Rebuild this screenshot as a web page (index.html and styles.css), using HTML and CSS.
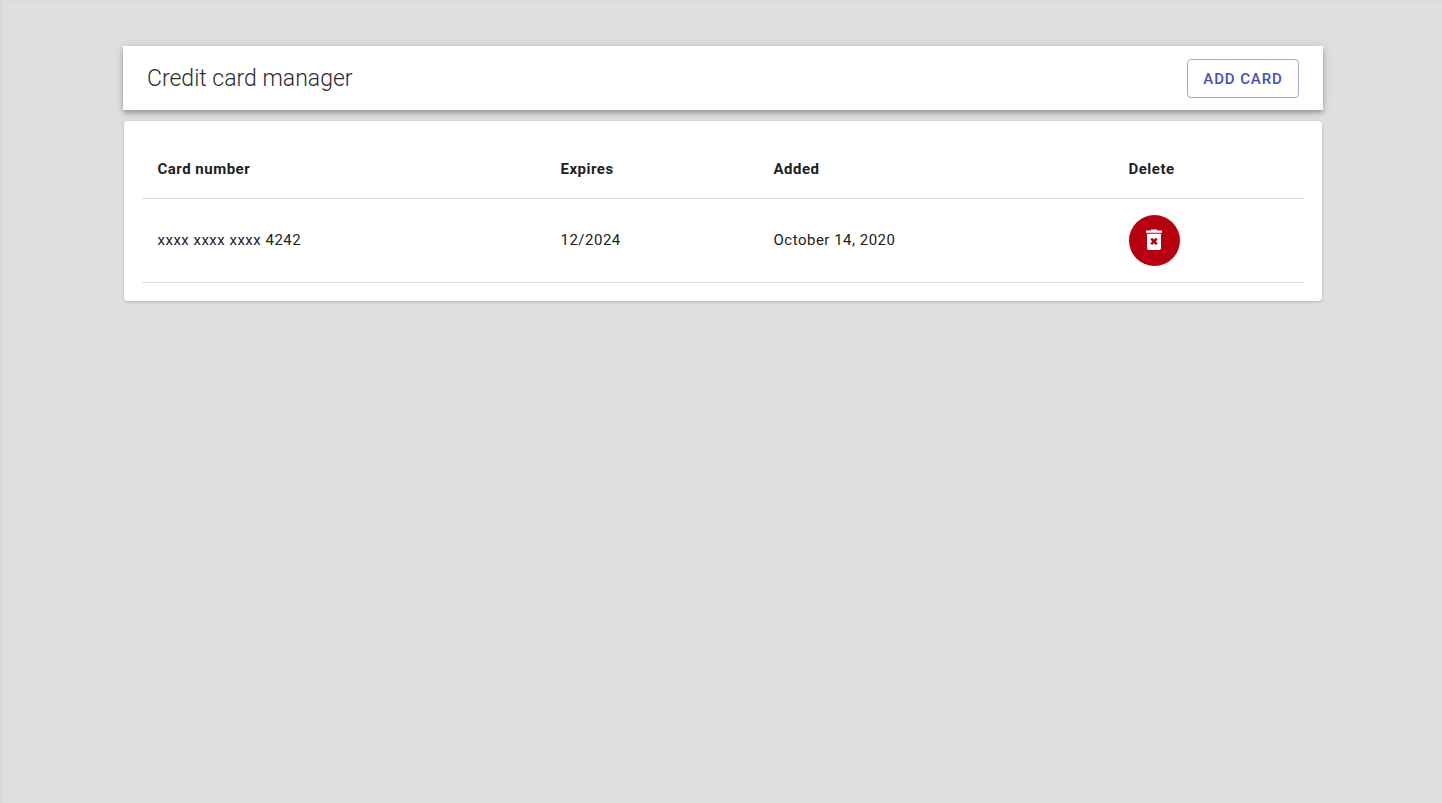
FILE: index.html
```html
<!DOCTYPE html>
<html lang="en">
<head>
<meta charset="utf-8">
<title>Credit card manager</title>
<link rel="stylesheet" href="styles.css">
</head>
<body>
<main class="page">
  <header class="topbar">
    <h1 class="title">Credit card manager</h1>
    <button class="add-btn" type="button">Add card</button>
  </header>
  <section class="card">
    <table class="cards-table">
      <colgroup>
        <col class="col-number"><col class="col-expires"><col class="col-added"><col class="col-delete">
      </colgroup>
      <thead>
        <tr><th>Card number</th><th>Expires</th><th>Added</th><th>Delete</th></tr>
      </thead>
      <tbody>
        <tr>
          <td>xxxx xxxx xxxx 4242</td>
          <td>12/2024</td>
          <td>October 14, 2020</td>
          <td>
            <button class="delete-btn" type="button" aria-label="Delete">
              <svg class="delete-icon" viewBox="0 0 24 24" width="24" height="24" aria-hidden="true">
                <path fill="#fff" d="M15 2.6V1.4H9v1.2H4v2.2h16V2.6z"/>
                <path fill="#fff" d="M5 5.8h14v14c0 1.4-.9 2.3-2.3 2.3H7.3C5.9 22.100 5 21.200 5 19.800z"/>
                <path fill="#b70010" d="M8.300 11.500l1.800-1.800L12 11.600l1.900-1.900 1.800 1.800-1.900 1.900 1.900 1.900-1.800 1.800-1.900-1.900-1.900 1.900-1.800-1.800 1.900-1.900z"/>
              </svg>
            </button>
          </td>
        </tr>
      </tbody>
    </table>
  </section>
</main>
</body>
</html>
```
FILE: styles.css
```css
* { box-sizing: border-box; }
html, body { height: 100%; }
body {
  margin: 0;
  background: #dfdfdf;
  border-left: 2px solid #d3dae6;
  border-top: 1px solid #d6d9de;
  font-family: Roboto, "Liberation Sans", sans-serif;
  color: #212121;
  overflow: hidden;
}
.page {
  width: 1200px;
  margin-left: 121px;
  padding-top: 45px;
}
.topbar {
  height: 64px;
  background: #fff;
  display: flex;
  align-items: center;
  justify-content: space-between;
  padding: 0 24px;
  box-shadow: 0 2px 4px -1px rgba(0,0,0,.2), 0 4px 5px 0 rgba(0,0,0,.14), 0 1px 10px 0 rgba(0,0,0,.12);
}
.title {
  margin: 0;
  font-size: 23px;
  font-weight: 300;
  line-height: 1;
  padding-top: 1px;
  color: #2b2b2b;
}
.add-btn {
  width: 112px;
  height: 39px;
  padding: 1px 0 0;
  background: #fff;
  border: 1px solid #9fa8da;
  border-radius: 4px;
  color: #3f51b5;
  font: 500 15px Roboto, "Liberation Sans", sans-serif;
  letter-spacing: .9px;
  text-transform: uppercase;
}
.card {
  margin: 11px 1px 0;
  background: #fff;
  border-radius: 4px;
  padding: 18px;
  box-shadow: 0 1px 3px rgba(0,0,0,.2);
}
.cards-table {
  width: 1162px;
  border-collapse: collapse;
  table-layout: fixed;
  font-size: 15px;
  letter-spacing: .5px;
}
.col-number { width: 403px; }
.col-expires { width: 213px; }
.col-added { width: 355px; }
.col-delete { width: 191px; }
th {
  height: 59px;
  padding: 2px 15px 0 15.5px;
  text-align: left;
  font-weight: 700;
  border-bottom: 1px solid #dedede;
}
td {
  height: 84px;
  padding: 0 15px 0 15.5px;
  border-bottom: 1px solid #dedede;
}
.delete-btn {
  display: flex;
  align-items: center;
  justify-content: center;
  width: 51px;
  height: 51px;
  padding: 0;
  border: 0;
  border-radius: 50%;
  background: #b70010;
}
.delete-icon { display: block; }
```
